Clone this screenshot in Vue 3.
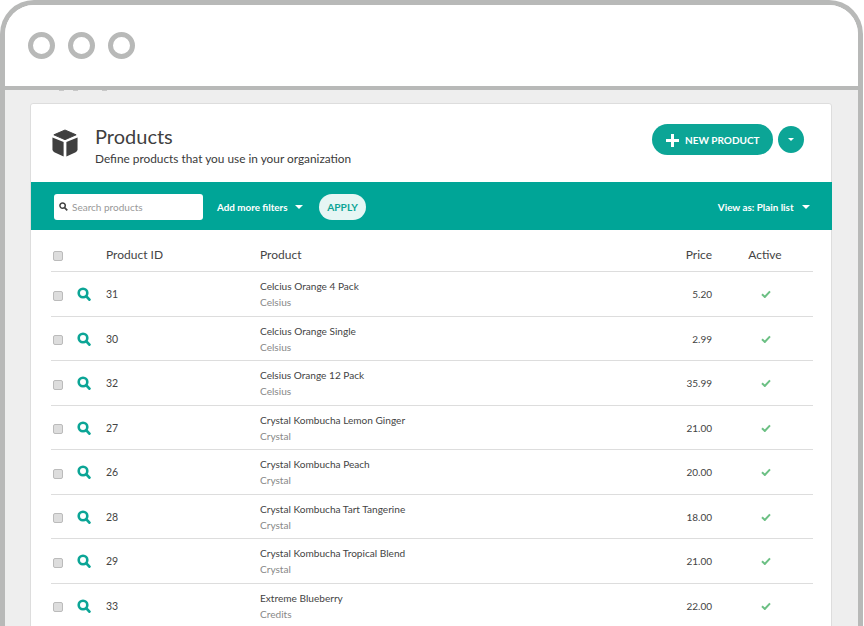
<script setup>
const rows = [
  { id: 31, name: 'Celcius Orange 4 Pack', brand: 'Celsius', price: '5.20' },
  { id: 30, name: 'Celcius Orange Single', brand: 'Celsius', price: '2.99' },
  { id: 32, name: 'Celsius Orange 12 Pack', brand: 'Celsius', price: '35.99' },
  { id: 27, name: 'Crystal Kombucha Lemon Ginger', brand: 'Crystal', price: '21.00' },
  { id: 26, name: 'Crystal Kombucha Peach', brand: 'Crystal', price: '20.00' },
  { id: 28, name: 'Crystal Kombucha Tart Tangerine', brand: 'Crystal', price: '18.00' },
  { id: 29, name: 'Crystal Kombucha Tropical Blend', brand: 'Crystal', price: '21.00' },
  { id: 33, name: 'Extreme Blueberry', brand: 'Credits', price: '22.00' },
]
</script>

<template>
  <div class="window">
    <header class="chrome">
      <span class="dot"></span><span class="dot"></span><span class="dot"></span>
    </header>
    <main class="desk">
      <div class="peek"><i></i><i></i><i></i></div>
      <section class="card">
        <div class="head">
          <svg class="cube" width="26" height="28" viewBox="0 0 28 30">
            <path d="M14 1 L26 6.2 L14 11.4 L2 6.2 Z" fill="#3f3f3f" stroke="#3f3f3f" stroke-linejoin="round" />
            <path d="M0.5 9 L12.5 14 L12.5 29.5 L2.5 25 Q0.5 24 0.5 22 Z" fill="#3f3f3f" />
            <path d="M27.5 9 L15.5 14 L15.5 29.5 L25.5 25 Q27.5 24 27.5 22 Z" fill="#3f3f3f" />
          </svg>
          <div class="titles">
            <h1>Products</h1>
            <p>Define products that you use in your organization</p>
          </div>
          <button class="new">
            <svg width="13" height="13" viewBox="0 0 13 13"><path d="M5 0h3v5h5v3H8v5H5V8H0V5h5z" fill="#fff" /></svg>
            NEW PRODUCT
          </button>
          <button class="more"><i class="caret small"></i></button>
        </div>
        <div class="filters">
          <label class="search">
            <svg width="9" height="9" viewBox="0 0 10 10"><circle cx="4" cy="4" r="3" fill="none" stroke="#444" stroke-width="1.7" /><path d="M6.2 6.2 9.2 9.2" stroke="#444" stroke-width="1.9" /></svg>
            <span>Search products</span>
          </label>
          <span class="link filter">Add more filters <i class="caret"></i></span>
          <button class="apply">APPLY</button>
          <span class="link view">View as: Plain list <i class="caret"></i></span>
        </div>
        <div class="table">
          <div class="row th">
            <span class="box"></span>
            <span class="sp"></span>
            <span>Product ID</span>
            <span>Product</span>
            <span class="price">Price</span>
            <span class="active">Active</span>
          </div>
          <div v-for="r in rows" :key="r.id" class="row td">
            <span class="box"></span>
            <svg class="mag" width="14" height="14" viewBox="0 0 14 14">
              <circle cx="6" cy="6" r="4.3" fill="none" stroke="#0ca596" stroke-width="2.6" />
              <path d="M9.4 9.4 12.4 12.6" stroke="#0ca596" stroke-width="2.8" stroke-linecap="round" />
            </svg>
            <span class="id">{{ r.id }}</span>
            <div class="prod">
              <div class="name">{{ r.name }}</div>
              <div class="brand">{{ r.brand }}</div>
            </div>
            <span class="price num">{{ r.price }}</span>
            <span class="active">
              <svg width="10" height="8" viewBox="0 0 10 8"><path d="M1 4.2 3.8 7 9 1.4" fill="none" stroke="#6cc084" stroke-width="2" /></svg>
            </span>
          </div>
        </div>
      </section>
    </main>
  </div>
</template>

<style>
html, body { background: #fff; overflow: hidden; }
</style>

<style scoped>
.window {
  box-sizing: border-box;
  width: 863px;
  height: 626px;
  border: 5px solid #b8b9b8;
  border-bottom: 0;
  border-radius: 34px 34px 0 0;
  overflow: hidden;
  font-family: Lato, sans-serif;
  color: #444;
}
.chrome {
  box-sizing: border-box;
  height: 85px;
  border-bottom: 4px solid #b8b9b8;
  display: flex;
  align-items: flex-start;
  gap: 13px;
  padding: 27px 0 0 23px;
  background: #fff;
}
.dot {
  box-sizing: border-box;
  width: 27px;
  height: 27px;
  border: 5px solid #b8b9b8;
  border-radius: 50%;
}
.desk {
  position: relative;
  background: #eee;
  height: 536px;
  padding: 13px 26px 0 25px;
  overflow: hidden;
}
.peek { position: absolute; top: 0; left: 0; }
.peek i { position: absolute; top: 0; width: 5px; height: 1px; background: #c8c8c8; }
.peek i:nth-child(1) { left: 54px; }
.peek i:nth-child(2) { left: 68px; }
.peek i:nth-child(3) { left: 97px; }
.card {
  background: #fff;
  border: 1px solid #ddd;
  border-radius: 3px;
  height: 600px;
}
.head {
  height: 78px;
  display: flex;
  align-items: flex-start;
  position: relative;
  padding-left: 21px;
}
.cube { margin-top: 25px; }
.titles { margin-left: 17px; margin-top: 19px; flex: 1; }
h1 {
  margin: 0;
  font-size: 20px;
  font-weight: 400;
  line-height: 26px;
  color: #3f3f3f;
}
.titles p { margin: 2px 0 0; font-size: 11.85px; line-height: 16px; color: #3a3a3a; }
.new {
  margin-top: 20px;
  width: 121px;
  height: 31px;
  border: 0;
  border-radius: 16px;
  background: #0ca596;
  color: #fff;
  font: 700 10px Lato, sans-serif;
  display: flex;
  align-items: center;
  gap: 6px;
  padding: 1px 0 0 14px;
  white-space: nowrap;
}
.more {
  margin: 22px 27px 0 5px;
  width: 26px;
  height: 27px;
  border: 0;
  border-radius: 50%;
  background: #0ca596;
  display: flex;
  align-items: center;
  justify-content: center;
  padding: 0;
}
.caret {
  display: inline-block;
  width: 0; height: 0;
  border-left: 4px solid transparent;
  border-right: 4px solid transparent;
  border-top: 4px solid #fff;
  margin-left: 5px;
  vertical-align: 2px;
}
.caret.small { margin: 0; border-width: 3.5px 3.5px 0; }
.filters {
  box-sizing: border-box;
  height: 48px;
  background: #00a597;
  display: flex;
  align-items: center;
  padding: 1px 22px 0 23px;
  margin: 0 -1px 0 0;
}
.search {
  width: 149px;
  height: 26px;
  box-sizing: border-box;
  background: #fff;
  border-radius: 3px;
  display: flex;
  align-items: center;
  gap: 4px;
  padding-left: 5px;
  font-size: 10px;
  color: #999;
}
.link { color: #fff; font-size: 9.85px; font-weight: 700; white-space: nowrap; }
.filter { margin-left: 14px; }
.apply {
  margin-left: 16px;
  width: 47px;
  height: 26px;
  border: 0;
  border-radius: 13px;
  background: #e6f6f4;
  color: #0ca596;
  font: 700 10.2px Lato, sans-serif;
  padding: 0;
}
.view { margin-left: auto; }
.view .caret { margin-left: 6px; }
.table { margin: 0 18px 0 20px; }
.row {
  display: grid;
  grid-template-columns: 27px 28px 154px 1fr 60px 101px;
  align-items: center;
  border-bottom: 1px solid #ddd;
  box-sizing: border-box;
  height: 44.5px;
}
.th { height: 42.3px; font-size: 12px; color: #444; padding-top: 7px; }
.box {
  box-sizing: border-box;
  width: 10px;
  height: 10px;
  margin: 3px 0 0 2px;
  background: #ddd;
  border: 1px solid #bbb;
  border-radius: 2px;
}
.mag { display: block; margin-left: -1px; }
.id { font-size: 10.5px; color: #444; }
.num { font-size: 10px; color: #444; }
.prod { padding-top: 1px; }
.name { font-size: 10.1px; line-height: 15px; color: #444; }
.brand { font-size: 10.1px; line-height: 16px; color: #888; }
.price { text-align: right; }
.active { text-align: center; padding-left: 5px; }
.td .active { display: flex; justify-content: center; padding-left: 7px; }
</style>
